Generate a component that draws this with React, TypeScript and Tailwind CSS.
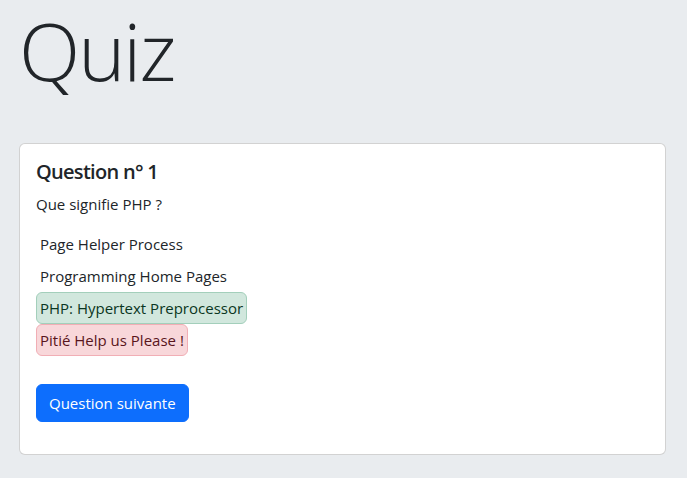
import React from "react";

export default function App() {
  const font = { fontFamily: '"Open Sans", "Noto Sans", sans-serif' };
  return (
    <div className="flow-root min-h-[478px] bg-[#e9ecef] text-[#212529] pl-[19px] pr-[21px]" style={font}>
      <h1 className="text-[80px] font-light leading-[110px] mt-[-5px] mb-[38px] tracking-[-2px]">Quiz</h1>
      <div className="bg-white border border-[rgba(0,0,0,0.175)] rounded-[6px] p-4">
        <h5 className="text-[20px] font-semibold leading-[1.2] mb-2 tracking-[-0.7px]">Question n° 1</h5>
        <p className="text-[15px] leading-[24px] mb-3">Que signifie PHP ?</p>
        <div className="flex flex-col items-start text-[15px] leading-[24px]">
          <div className="px-[3px] py-[3px] border border-transparent rounded-[6px]">Page Helper Process</div>
          <div className="px-[3px] py-[3px] border border-transparent rounded-[6px]">Programming Home Pages</div>
          <div className="px-[3px] py-[3px] border border-[#a3cfbb] bg-[#d1e7dd] text-[#0a3622] rounded-[6px]">PHP: Hypertext Preprocessor</div>
          <div className="px-[3px] py-[3px] border border-[#f1aeb5] bg-[#f8d7da] text-[#58151c] rounded-[6px]">Pitié Help us Please !</div>
        </div>
        <button className="mt-[28px] mb-4 bg-[#0d6efd] text-white text-[15px] leading-[24px] px-3 py-[6px] border border-[#0d6efd] rounded-[6px]">Question suivante</button>
      </div>
    </div>
  );
}
